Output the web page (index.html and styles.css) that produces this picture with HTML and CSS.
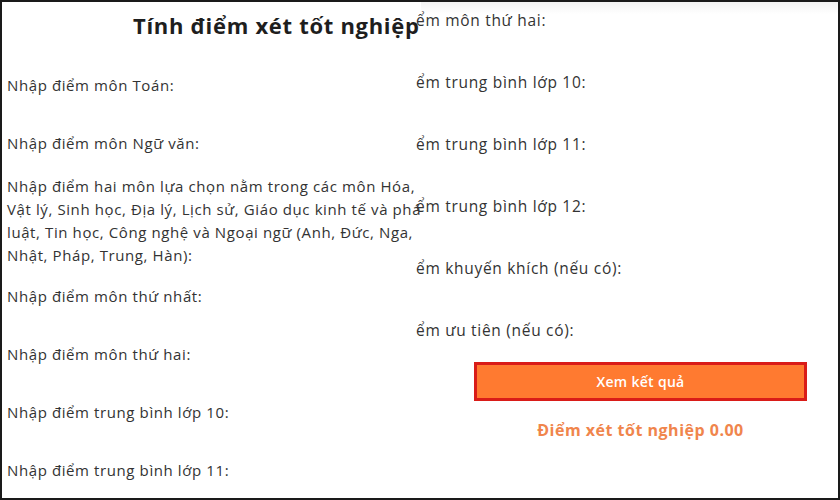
FILE: index.html
```html
<!DOCTYPE html>
<html lang="vi">
<head>
<meta charset="utf-8">
<title>Tính điểm xét tốt nghiệp</title>
<link rel="stylesheet" href="styles.css">
</head>
<body>
<div class="frame">
  <section class="left">
    <div class="left-inner">
      <h1 class="title">Tính điểm xét tốt nghiệp</h1>
      <p class="label">Nhập điểm môn Toán:</p>
      <p class="label">Nhập điểm môn Ngữ văn:</p>
      <p class="note">Nhập điểm hai môn lựa chọn nằm trong các môn Hóa,<br>Vật lý, Sinh học, Địa lý, Lịch sử, Giáo dục kinh tế và pháp<br>luật, Tin học, Công nghệ và Ngoại ngữ (Anh, Đức, Nga,<br>Nhật, Pháp, Trung, Hàn):</p>
      <p class="label">Nhập điểm môn thứ nhất:</p>
      <p class="label">Nhập điểm môn thứ hai:</p>
      <p class="label">Nhập điểm trung bình lớp 10:</p>
      <p class="label">Nhập điểm trung bình lớp 11:</p>
    </div>
  </section>
  <section class="right">
    <p class="rlabel">ểm môn thứ hai:</p>
    <p class="rlabel">ểm trung bình lớp 10:</p>
    <p class="rlabel">ểm trung bình lớp 11:</p>
    <p class="rlabel">ểm trung bình lớp 12:</p>
    <p class="rlabel">ểm khuyến khích (nếu có):</p>
    <p class="rlabel">ểm ưu tiên (nếu có):</p>
    <button class="btn" type="button">Xem kết quả</button>
    <p class="result">Điểm xét tốt nghiệp 0.00</p>
  </section>
</div>
</body>
</html>
```
FILE: styles.css
```css
* { box-sizing: border-box; }
html, body { margin: 0; padding: 0; background: #fff; }
body { font-family: "Open Sans", "Liberation Sans", sans-serif; color: #333; }

.frame {
  width: 840px;
  height: 500px;
  border: 2px solid #1a1a1a;
  display: flex;
  overflow: hidden;
  background: #fff;
}

.left {
  width: 419px;
  flex: none;
  overflow: hidden;
}
.left-inner {
  width: 520px;
  padding-left: 5px;
}
.title {
  margin: 8px 0 0 126px;
  font-size: 22px;
  line-height: 30px;
  font-weight: 700;
  letter-spacing: 0.7px;
  color: #1e1e1e;
  white-space: nowrap;
}
.label, .note {
  font-size: 15px;
  line-height: 23px;
  letter-spacing: 0.6px;
  white-space: nowrap;
}
.label { margin: 0 0 35px; }
.title + .label { margin-top: 34px; }
.note { margin: -15px 0 18px; }

.right {
  flex: 1;
  margin-left: -5px;
  display: flex;
  flex-direction: column;
  align-items: flex-start;
  background: linear-gradient(to bottom, rgba(0,0,0,0.05), rgba(0,0,0,0) 12px);
  background-position: 5px 0;
  background-repeat: no-repeat;
}
.rlabel {
  margin: 0 0 38px;
  font-size: 15.5px;
  line-height: 24px;
  letter-spacing: 0.7px;
  white-space: nowrap;
}
.rlabel:first-child { margin-top: 6px; }
.rlabel:nth-child(6) { margin-bottom: 20px; }

.btn {
  margin-left: 58px;
  width: 333px;
  height: 39px;
  border: 3px solid #d91c18;
  background: #ff7a30;
  color: #fff;
  font-family: inherit;
  font-size: 14px;
  font-weight: 600;
  letter-spacing: 0.3px;
  padding: 0;
}
.result {
  margin: 17px 0 0 58px;
  width: 333px;
  text-align: center;
  font-size: 16px;
  line-height: 24px;
  font-weight: 700;
  letter-spacing: 0.5px;
  color: #f0854c;
}
```
